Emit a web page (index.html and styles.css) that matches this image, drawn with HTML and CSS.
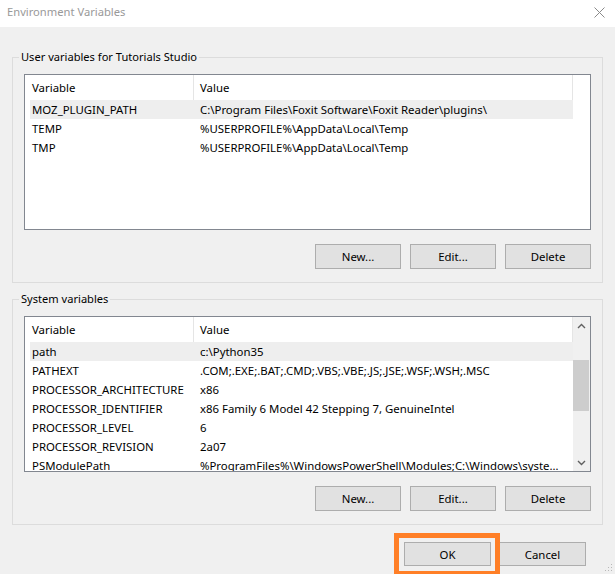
FILE: index.html
```html
<!DOCTYPE html>
<html lang="en">
<head>
<meta charset="utf-8">
<title>Environment Variables</title>
<link rel="stylesheet" href="styles.css">
</head>
<body>
<div class="dialog">
  <div class="titlebar">
    <span class="title">Environment Variables</span>
    <svg class="close" width="11" height="11" viewBox="0 0 11 11"><path d="M0.5 0.5L10.5 10.5M10.5 0.5L0.5 10.5" stroke="#8a8a8a" stroke-width="1" fill="none"/></svg>
  </div>
  <div class="content">
    <fieldset class="group">
      <legend>User variables for Tutorials Studio</legend>
      <div class="list">
        <div class="table">
          <div class="head"><div class="hcell c1">Variable</div><div class="hcell c2">Value</div></div>
          <div class="row sel"><span class="c1">MOZ_PLUGIN_PATH</span><span class="c2">C:\Program Files\Foxit Software\Foxit Reader\plugins\</span></div>
          <div class="row"><span class="c1">TEMP</span><span class="c2">%USERPROFILE%\AppData\Local\Temp</span></div>
          <div class="row"><span class="c1">TMP</span><span class="c2">%USERPROFILE%\AppData\Local\Temp</span></div>
        </div>
        <div class="vspace"></div>
      </div>
      <div class="buttons">
        <button class="btn">New...</button>
        <button class="btn">Edit...</button>
        <button class="btn">Delete</button>
      </div>
    </fieldset>

    <fieldset class="group second">
      <legend>System variables</legend>
      <div class="list">
        <div class="table">
          <div class="head"><div class="hcell c1">Variable</div><div class="hcell c2">Value</div></div>
          <div class="row sel"><span class="c1">path</span><span class="c2">c:\Python35</span></div>
          <div class="row"><span class="c1">PATHEXT</span><span class="c2">.COM;.EXE;.BAT;.CMD;.VBS;.VBE;.JS;.JSE;.WSF;.WSH;.MSC</span></div>
          <div class="row"><span class="c1">PROCESSOR_ARCHITECTURE</span><span class="c2">x86</span></div>
          <div class="row"><span class="c1">PROCESSOR_IDENTIFIER</span><span class="c2">x86 Family 6 Model 42 Stepping 7, GenuineIntel</span></div>
          <div class="row"><span class="c1">PROCESSOR_LEVEL</span><span class="c2">6</span></div>
          <div class="row"><span class="c1">PROCESSOR_REVISION</span><span class="c2">2a07</span></div>
          <div class="row"><span class="c1">PSModulePath</span><span class="c2">%ProgramFiles%\WindowsPowerShell\Modules;C:\Windows\system32\WindowsPowerShell\v1.0\Modules</span></div>
        </div>
        <div class="scrollbar">
          <div class="arrow">
            <svg width="9" height="6" viewBox="0 0 9 6"><path d="M1 5L4.5 1.5L8 5" stroke="#606060" stroke-width="1.4" fill="none"/></svg>
          </div>
          <div class="track"><div class="thumb"></div></div>
          <div class="arrow">
            <svg width="9" height="6" viewBox="0 0 9 6"><path d="M1 1L4.5 4.5L8 1" stroke="#606060" stroke-width="1.4" fill="none"/></svg>
          </div>
        </div>
      </div>
      <div class="buttons">
        <button class="btn">New...</button>
        <button class="btn">Edit...</button>
        <button class="btn">Delete</button>
      </div>
    </fieldset>

    <div class="footer">
      <span class="highlighted">
        <button class="btn btn-foot">OK</button>
        <span class="marker"></span>
      </span>
      <button class="btn btn-foot">Cancel</button>
    </div>
  </div>
  <svg class="grip" width="8" height="8" viewBox="0 0 8 8">
    <rect x="6" y="0" width="1" height="1" fill="#b8b8b8"/>
    <rect x="3" y="3" width="1" height="1" fill="#b8b8b8"/>
    <rect x="6" y="3" width="1" height="1" fill="#b8b8b8"/>
    <rect x="0" y="6" width="1" height="1" fill="#b8b8b8"/>
    <rect x="3" y="6" width="1" height="1" fill="#b8b8b8"/>
    <rect x="6" y="6" width="1" height="1" fill="#b8b8b8"/>
  </svg>
</div>
</body>
</html>
```

FILE: styles.css
```css
* { box-sizing: border-box; }

html, body {
  margin: 0;
  padding: 0;
}

body {
  width: 615px;
  height: 574px;
  overflow: hidden;
  background: #f0f0f0;
  font-family: "Noto Sans", "Open Sans", sans-serif;
  font-size: 11.4px;
  color: #000;
}

.dialog {
  position: relative;
  width: 615px;
  height: 574px;
}

.titlebar {
  height: 27px;
  background: #fff;
  display: flex;
  align-items: center;
  justify-content: space-between;
  padding: 0 10px 3px 7px;
}

.title {
  color: #999;
  line-height: 16px;
  font-size: 11.2px;
}

.close {
  display: block;
  margin-top: 1px;
}

.content {
  padding: 22px 12px 0 12px;
}

.group {
  margin: 0;
  padding: 9px 11px 13px 11px;
  border: 1px solid #dcdcdc;
  min-width: 0;
}

.group.second {
  margin-top: 8px;
}

.group legend {
  padding: 0 2px;
  margin-left: -5px;
  line-height: 16px;
  font-size: 11.1px;
}

.list {
  height: 156px;
  border: 1px solid #828790;
  background: #fff;
  display: flex;
  overflow: hidden;
}

.table {
  flex: 1;
  min-width: 0;
  overflow: hidden;
}

.vspace {
  width: 17px;
}

.head {
  display: flex;
  height: 25px;
  border-right: 1px solid #e5e5e5;
}

.hcell {
  display: flex;
  align-items: center;
  height: 25px;
}

.hcell.c1 {
  width: 169px;
  padding-left: 7px;
  border-right: 1px solid #e5e5e5;
}

.hcell.c2 {
  flex: 1;
  padding-left: 6px;
}

.row {
  display: flex;
  align-items: center;
  height: 19px;
  margin-left: 5px;
  white-space: nowrap;
}

.row.sel {
  background: #eeeeee;
}

.row .c1 {
  width: 164px;
  flex: none;
  padding-left: 2px;
  overflow: hidden;
}

.row .c2 {
  flex: 1;
  min-width: 0;
  padding-left: 6px;
  padding-right: 8px;
  overflow: hidden;
  text-overflow: ellipsis;
}

.scrollbar {
  width: 17px;
  display: flex;
  flex-direction: column;
  background: #f0f0f0;
}

.arrow {
  height: 17px;
  display: flex;
  align-items: center;
  justify-content: center;
}

.track {
  flex: 1;
  padding-top: 26px;
}

.thumb {
  height: 51px;
  margin: 0 1px 0 0;
  background: #cdcdcd;
}

.buttons {
  display: flex;
  justify-content: flex-end;
  gap: 9px;
  margin-top: 14px;
}

.btn {
  width: 86px;
  height: 25px;
  padding: 0;
  margin: 0;
  background: #e1e1e1;
  border: 1px solid #adadad;
  font-family: inherit;
  font-size: 11.4px;
  color: #000;
}

.footer {
  display: flex;
  justify-content: flex-end;
  gap: 8px;
  margin-top: 17px;
  padding-right: 17px;
}

.btn-foot {
  width: 87px;
  height: 24px;
  display: block;
}

.highlighted {
  position: relative;
  display: block;
}

.marker {
  position: absolute;
  left: -10px;
  right: -9px;
  top: -9px;
  bottom: -10px;
  border: 5px solid #ff7f27;
  pointer-events: none;
}

.grip {
  position: absolute;
  right: 2px;
  bottom: 2px;
}
```
